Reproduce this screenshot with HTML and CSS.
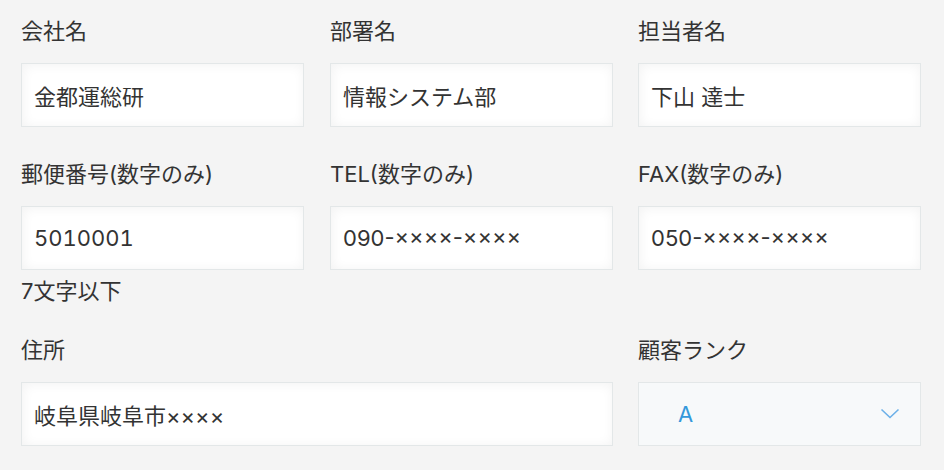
FILE: index.html
```html
<!DOCTYPE html>
<html lang="ja">
<head>
<meta charset="utf-8">
<link rel="stylesheet" href="styles.css">
</head>
<body>
<div class="form">
  <div class="field">
    <div class="label">会社名</div>
    <div class="input">金都運総研</div>
  </div>
  <div class="field">
    <div class="label">部署名</div>
    <div class="input">情報システム部</div>
  </div>
  <div class="field">
    <div class="label">担当者名</div>
    <div class="input">下山 達士</div>
  </div>

  <div class="field">
    <div class="label">郵便番号(数字のみ)</div>
    <div class="input numeric">5010001</div>
    <div class="hint">7文字以下</div>
  </div>
  <div class="field">
    <div class="label">TEL(数字のみ)</div>
    <div class="input">090-××××-××××</div>
  </div>
  <div class="field">
    <div class="label">FAX(数字のみ)</div>
    <div class="input">050-××××-××××</div>
  </div>

  <div class="field span2">
    <div class="label">住所</div>
    <div class="input">岐阜県岐阜市××××</div>
  </div>
  <div class="field">
    <div class="label">顧客ランク</div>
    <div class="select">
      <span class="select-value">A</span>
      <svg class="chevron" width="20" height="12" viewBox="0 0 20 12"><polyline points="1.5,1.5 10,9.5 18.5,1.5" fill="none" stroke="#6cb0e8" stroke-width="1.6"/></svg>
    </div>
  </div>
</div>
</body>
</html>
```
FILE: styles.css
```css
html, body {
  margin: 0;
  padding: 0;
  background: #f4f4f4;
}
body {
  font-family: Inter, "Noto Sans CJK JP", sans-serif;
  font-size: 22px;
  color: #333333;
}
.form {
  display: grid;
  grid-template-columns: 309px 308px 283px;
  row-gap: 31px;
  padding: 15px 0 0 21px;
  align-items: start;
}
.field {
  width: 283px;
  display: flex;
  flex-direction: column;
}
.field.span2 {
  grid-column: span 2;
  width: 592px;
}
.label {
  line-height: 32px;
  height: 32px;
  margin-bottom: 16px;
  white-space: nowrap;
}
.input {
  box-sizing: border-box;
  height: 64px;
  border: 1px solid #e3e7e8;
  background: #ffffff;
  box-shadow: 1px 1px 12px #f2f2f2 inset;
  padding: 0 12px;
  display: flex;
  align-items: center;
  white-space: nowrap;
}
.numeric {
  font-feature-settings: "tnum";
}
.hint {
  line-height: 28px;
  margin-top: 7px;
  margin-bottom: -2px;
}
.select {
  box-sizing: border-box;
  height: 64px;
  border: 1px solid #e3e7e8;
  background: #f7f9fa;
  padding: 0 20px 0 39px;
  display: flex;
  align-items: center;
  justify-content: space-between;
  color: #3498db;
}
.chevron {
  display: block;
}
```
